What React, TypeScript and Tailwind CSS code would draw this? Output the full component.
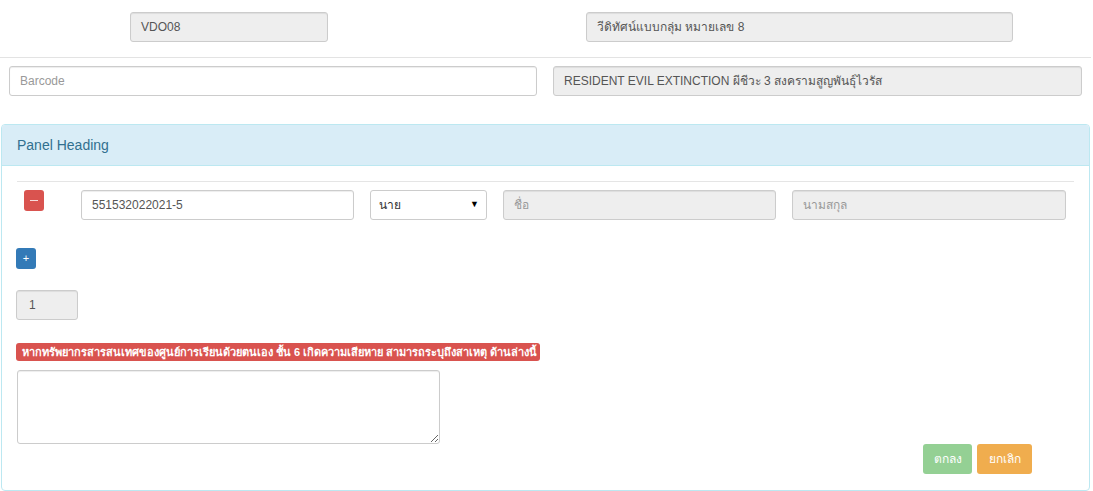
const font = "font-['Liberation_Sans','Noto_Sans','DejaVu_Sans',sans-serif]";

function Field({ value, placeholder, disabled, className = '' }: { value?: string; placeholder?: string; disabled?: boolean; className?: string }) {
  return (
    <div
      className={`h-[30px] border border-[#cccccc] rounded-[3px] px-[10px] flex items-center text-[12px] shrink-0 shadow-[inset_0_1px_1px_rgba(0,0,0,0.075)] ${
        disabled ? 'bg-[#eeeeee]' : 'bg-white'
      } ${value ? 'text-[#555555]' : 'text-[#999999]'} ${className}`}
    >
      {value ?? placeholder}
    </div>
  );
}

export default function App() {
  return (
    <div className={`w-[1093px] h-[491px] bg-white overflow-hidden ${font}`}>
      <div className="flex pt-[12px]">
        <Field value="VDO08" disabled className="ml-[130px] w-[198px]" />
        <Field value="วีดิทัศน์แบบกลุ่ม หมายเลข 8" disabled className="ml-[258px] w-[427px]" />
      </div>

      <div className="mt-[15px] border-t border-[#e3e3e3] w-[1091px]" />

      <div className="flex mt-[8px]">
        <Field placeholder="Barcode" className="ml-[9px] w-[528px]" />
        <Field value="RESIDENT EVIL EXTINCTION ผีชีวะ 3 สงครามสูญพันธุ์ไวรัส" disabled className="ml-[16px] w-[529px]" />
      </div>

      <div className="mt-[28px] ml-[1px] w-[1089px] h-[367px] border border-[#bce8f1] rounded-[4px] flex flex-col">
        <div className="h-[41px] bg-[#d9edf7] border-b border-[#bce8f1] rounded-t-[3px] px-[15px] flex items-center text-[14px] text-[#31708f]">
          Panel Heading
        </div>

        <div className="px-[15px] pt-[15px] flex flex-col flex-1">
          <div className="border-t border-[#e5e5e5]" />

          <div className="flex items-start mt-[8px]">
            <div className="ml-[7px] w-[20px] h-[21px] bg-[#d9534f] rounded-[3px] flex items-center justify-center">
              <div className="w-[8px] h-[1px] bg-white/80" />
            </div>
            <Field value="551532022021-5" className="ml-[37px] w-[273px]" />
            <div className="ml-[16px] w-[117px] h-[30px] border border-[#cccccc] rounded-[3px] bg-white flex items-center justify-between pl-[8px] pr-[7px] text-[12px] text-[#333]">
              <span>นาย</span>
              <span className="text-[9px] text-black">▼</span>
            </div>
            <Field placeholder="ชื่อ" disabled className="ml-[16px] w-[273px]" />
            <Field placeholder="นามสกุล" disabled className="ml-[16px] w-[274px]" />
          </div>

          <div className="mt-[28px] -ml-[1px] w-[20px] h-[21px] bg-[#337ab7] rounded-[3px] flex items-center justify-center text-white text-[11px] leading-none">
            +
          </div>

          <Field value="1" disabled className="mt-[21px] -ml-[1px] w-[62px] px-[12px]" />

          <div className="mt-[23px] -ml-[1px] w-[524px] h-[18px] bg-[#d9534f] rounded-[3px] flex items-center px-[6px] text-white text-[11px] font-bold whitespace-nowrap overflow-hidden">
            หากทรัพยากรสารสนเทศของศูนย์การเรียนด้วยตนเอง ชั้น 6 เกิดความเสียหาย สามารถระบุถึงสาเหตุ ด้านล่างนี้
          </div>

          <textarea
            className="mt-[9px] w-[423px] h-[74px] border border-[#cccccc] rounded-[3px] resize-y outline-none shadow-[inset_0_1px_1px_rgba(0,0,0,0.075)]"
            readOnly
          />

          <div className="flex justify-end gap-[5px] mr-[42px]">
            <div className="w-[49px] h-[30px] bg-[#5cb85c] opacity-65 rounded-[3px] text-white text-[12px] flex items-center justify-center">ตกลง</div>
            <div className="w-[55px] h-[30px] bg-[#f0ad4e] rounded-[3px] text-white text-[12px] flex items-center justify-center">ยกเลิก</div>
          </div>
        </div>
      </div>
    </div>
  );
}
